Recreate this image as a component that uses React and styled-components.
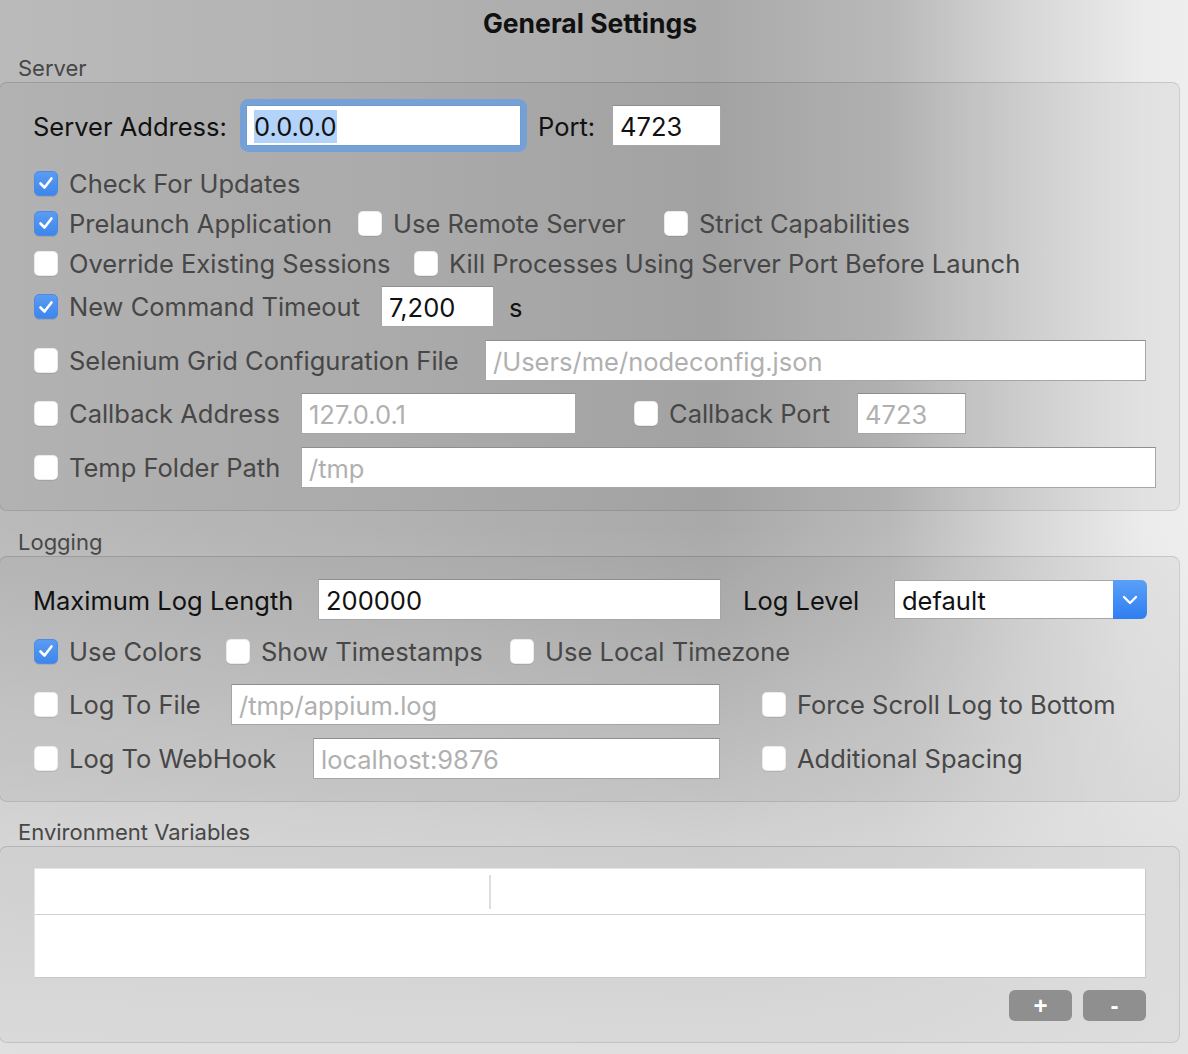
import styled, { createGlobalStyle } from "styled-components";

const GlobalStyle = createGlobalStyle`
  html, body {
    margin: 0;
    padding: 0;
  }
  body {
    width: 1188px;
    height: 1054px;
    overflow: hidden;
    font-family: Inter, "Noto Sans", "Liberation Sans", sans-serif;
    background:
      linear-gradient(to bottom, rgba(232,232,232,0) 50%, rgba(222,222,222,0.75) 80%, rgba(226,226,226,0.95) 100%),
      linear-gradient(to right, #bababa 0%, #b1b1b1 35%, #a9a9a9 60%, #b9b9b9 75%, #d6d6d6 86%, #ebebeb 96%, #eeeeee 100%);
  }
`;

function CheckMark() {
  return (
    <svg width="16" height="14" viewBox="0 0 16 14">
      <polyline
        points="2.5,7.5 6.5,11.5 13.5,2.5"
        fill="none"
        stroke="#fff"
        strokeWidth="2.6"
        strokeLinecap="round"
        strokeLinejoin="round"
      />
    </svg>
  );
}

function Chevron() {
  return (
    <svg width="16" height="10" viewBox="0 0 16 10">
      <polyline
        points="2,2 8,8 14,2"
        fill="none"
        stroke="#fff"
        strokeWidth="2.4"
        strokeLinecap="round"
        strokeLinejoin="round"
      />
    </svg>
  );
}

function Check({ checked, label, w, ml }) {
  return (
    <CheckItem $w={w} $ml={ml}>
      <Box $checked={checked}>{checked && <CheckMark />}</Box>
      <span>{label}</span>
    </CheckItem>
  );
}

export default function App() {
  return (
    <Page>
      <GlobalStyle />
      <Title>General Settings</Title>

      <Legend $mt={9}>Server</Legend>
      <Panel $pt={22} $pb={22}>
        <Row $h={41}>
          <FormLabel $w={213}>Server Address:</FormLabel>
          <Focused>
            <Field $w={275} $focus>
              <Selected>0.0.0.0</Selected>
            </Field>
          </Focused>
          <FormLabel $w={74} $ml={17}>Port:</FormLabel>
          <Field $w={109}>4723</Field>
        </Row>

        <Row $h={40} $mt={17}>
          <Check checked label="Check For Updates" />
        </Row>
        <Row $h={40}>
          <Check checked label="Prelaunch Application" w={324} />
          <Check label="Use Remote Server" w={306} />
          <Check label="Strict Capabilities" />
        </Row>
        <Row $h={40}>
          <Check label="Override Existing Sessions" w={380} />
          <Check label="Kill Processes Using Server Port Before Launch" />
        </Row>
        <Row $h={41} $mt={3}>
          <Check checked label="New Command Timeout" w={348} />
          <Field $w={113}>7,200</Field>
          <FormLabel $ml={15}>s</FormLabel>
        </Row>
        <Row $h={41} $mt={13}>
          <Check label="Selenium Grid Configuration File" w={452} />
          <Field $w={661} $placeholder>/Users/me/nodeconfig.json</Field>
        </Row>
        <Row $h={41} $mt={12}>
          <Check label="Callback Address" w={268} />
          <Field $w={275} $placeholder>127.0.0.1</Field>
          <Check label="Callback Port" w={224} ml={57} />
          <Field $w={109} $placeholder>4723</Field>
        </Row>
        <Row $h={41} $mt={13}>
          <Check label="Temp Folder Path" w={268} />
          <Field $w={855} $placeholder>/tmp</Field>
        </Row>
      </Panel>

      <Legend $mt={18}>Logging</Legend>
      <Panel $pt={22} $pb={22}>
        <Row $h={41}>
          <FormLabel $w={285}>Maximum Log Length</FormLabel>
          <Field $w={403}>200000</Field>
          <FormLabel $w={151} $ml={22}>Log Level</FormLabel>
          <Select>
            <SelectValue>default</SelectValue>
            <SelectArrow>
              <Chevron />
            </SelectArrow>
          </Select>
        </Row>
        <Row $h={40} $mt={11}>
          <Check checked label="Use Colors" w={192} />
          <Check label="Show Timestamps" w={284} />
          <Check label="Use Local Timezone" />
        </Row>
        <Row $h={41} $mt={13}>
          <Check label="Log To File" w={198} />
          <Field $w={489} $placeholder>/tmp/appium.log</Field>
          <Check label="Force Scroll Log to Bottom" ml={41} />
        </Row>
        <Row $h={41} $mt={13}>
          <Check label="Log To WebHook" w={280} />
          <Field $w={407} $placeholder>localhost:9876</Field>
          <Check label="Additional Spacing" ml={41} />
        </Row>
      </Panel>

      <Legend $mt={17}>Environment Variables</Legend>
      <Panel $pt={21} $pb={21} $light>
        <Table>
          <TableHead>
            <HeadCell $w={454} />
            <HeadCell />
          </TableHead>
        </Table>
        <Buttons>
          <SmallButton>+</SmallButton>
          <SmallButton>-</SmallButton>
        </Buttons>
      </Panel>
    </Page>
  );
}

const Page = styled.div`
  width: 1188px;
  height: 1054px;
  box-sizing: border-box;
  padding-right: 8px;
  display: flex;
  flex-direction: column;
`;

const Title = styled.h1`
  margin: 0;
  height: 46px;
  line-height: 46px;
  text-align: center;
  font-size: 26.5px;
  font-weight: 700;
  color: #111;
`;

const Legend = styled.div`
  margin-top: ${(p) => p.$mt || 0}px;
  padding-left: 18px;
  line-height: 27px;
  height: 27px;
  font-size: 22px;
  color: #474747;
`;

const Panel = styled.section`
  box-sizing: border-box;
  margin-left: -1px;
  padding: ${(p) => p.$pt}px 33px ${(p) => p.$pb}px 33px;
  border: 1px solid rgba(0, 0, 0, 0.1);
  border-top-color: rgba(0, 0, 0, 0.13);
  border-radius: 8px;
  background: ${(p) => (p.$light ? "rgba(0,0,0,0.025)" : "rgba(0,0,0,0.04)")};
  display: flex;
  flex-direction: column;
`;

const Row = styled.div`
  display: flex;
  align-items: center;
  height: ${(p) => p.$h}px;
  margin-top: ${(p) => p.$mt || 0}px;
  white-space: nowrap;
`;

const FormLabel = styled.div`
  box-sizing: border-box;
  flex: none;
  width: ${(p) => (p.$w ? `${p.$w}px` : "auto")};
  margin-left: ${(p) => p.$ml || 0}px;
  font-size: 25.5px;
  line-height: 30px;
  padding-top: 2px;
  color: #111;
`;

const CheckItem = styled.label`
  box-sizing: border-box;
  flex: none;
  display: flex;
  align-items: center;
  gap: 11px;
  padding-left: 1px;
  width: ${(p) => (p.$w ? `${p.$w}px` : "auto")};
  margin-left: ${(p) => p.$ml || 0}px;
  font-size: 25.5px;
  color: #474747;
`;

const Box = styled.span`
  box-sizing: border-box;
  width: 24px;
  height: 25px;
  border-radius: 5px;
  display: flex;
  align-items: center;
  justify-content: center;
  background: ${(p) => (p.$checked ? "linear-gradient(#5b9cf2, #3e86ec)" : "#ffffff")};
  border: 1px solid ${(p) => (p.$checked ? "#4a8bea" : "rgba(0,0,0,0.08)")};
  box-shadow: 0 1px 0 rgba(0, 0, 0, 0.08);
`;

const Focused = styled.div`
  flex: none;
  border-radius: 3px;
  box-shadow: 0 0 0 6px rgba(112, 160, 218, 0.9);
`;

const Field = styled.div`
  box-sizing: border-box;
  flex: none;
  width: ${(p) => p.$w}px;
  height: 41px;
  padding: 3px 0 0 7px;
  background: #fff;
  border: 1px solid ${(p) => (p.$focus ? "#6f9bd1" : "#a6a6a6")};
  border-top-color: ${(p) => (p.$focus ? "#6f9bd1" : "#8e8e8e")};
  font-size: 25.5px;
  line-height: 36px;
  color: ${(p) => (p.$placeholder ? "#b0b0b0" : "#111")};
  overflow: hidden;
`;

const Selected = styled.span`
  display: inline-block;
  line-height: 33px;
  background: #b3d3fb;
`;

const Select = styled.div`
  box-sizing: border-box;
  flex: none;
  width: 253px;
  height: 39px;
  display: flex;
  background: #fff;
  border: 1px solid #a6a6a6;
  border-right: none;
  border-radius: 0 6px 6px 0;
`;

const SelectValue = styled.div`
  flex: 1;
  padding: 2px 0 0 7px;
  font-size: 25.5px;
  line-height: 35px;
  color: #111;
`;

const SelectArrow = styled.div`
  width: 34px;
  margin: -1px 0;
  border-radius: 0 6px 6px 0;
  background: linear-gradient(#5aa0f8, #2f7ef1);
  display: flex;
  align-items: center;
  justify-content: center;
`;

const Table = styled.div`
  box-sizing: border-box;
  margin-left: 1px;
  height: 110px;
  background: #fff;
  border: 1px solid #c9c9c9;
  border-top-color: #e4e4e4;
  border-left-color: #e4e4e4;
`;

const TableHead = styled.div`
  display: flex;
  height: 45px;
  border-bottom: 1px solid #d2d2d2;
  align-items: center;
`;

const HeadCell = styled.div`
  flex: ${(p) => (p.$w ? "none" : "1")};
  width: ${(p) => (p.$w ? `${p.$w}px` : "auto")};
  height: 34px;
  border-right: ${(p) => (p.$w ? "2px solid #dedede" : "none")};
`;

const Buttons = styled.div`
  display: flex;
  justify-content: flex-end;
  gap: 11px;
  margin-top: 12px;
`;

const SmallButton = styled.button`
  width: 63px;
  height: 31px;
  border: none;
  border-radius: 6px;
  background: #8f8f8f;
  color: #fff;
  font-family: "Liberation Sans", Arial, sans-serif;
  font-size: 24px;
  font-weight: 700;
  line-height: 31px;
  padding: 0;
`;
